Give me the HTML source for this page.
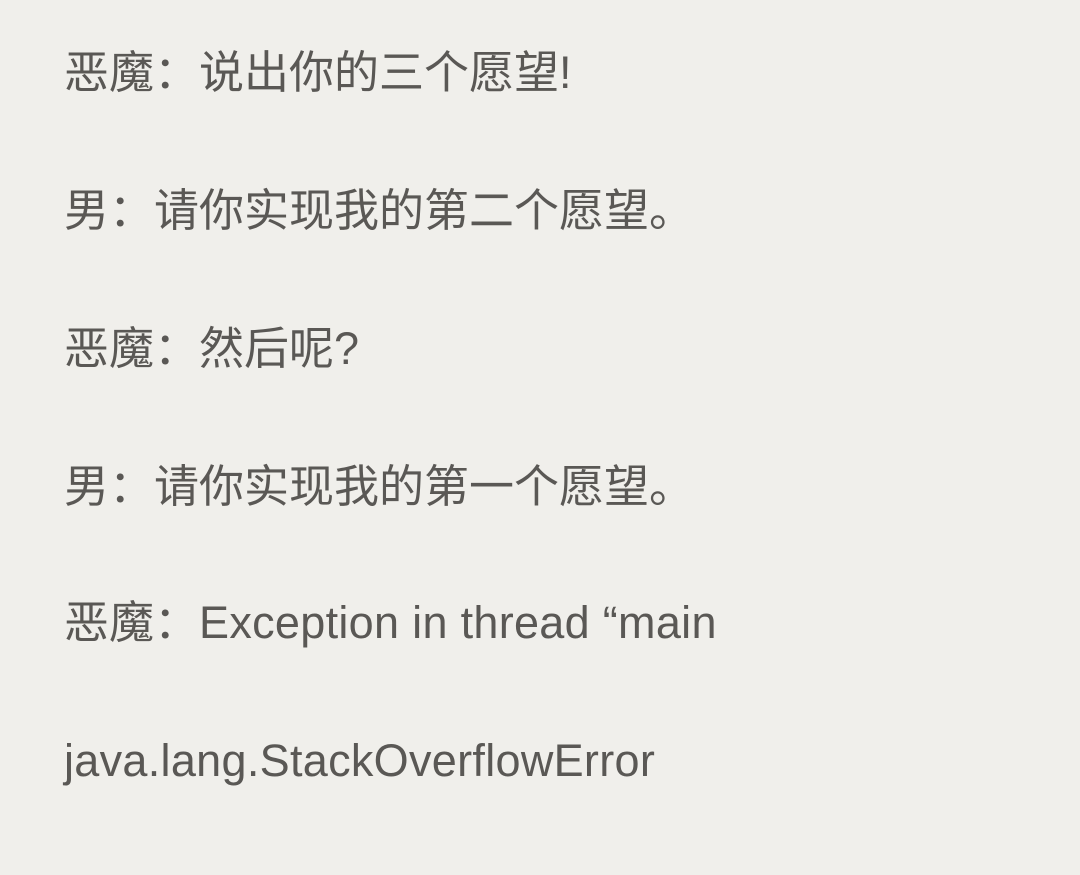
<!DOCTYPE html>
<html><head><meta charset="utf-8"><style>
html,body{margin:0;padding:0;width:1080px;height:875px;overflow:hidden;background:#f0efeb;}
.l{position:absolute;left:64px;height:60px;line-height:60px;font-size:45px;color:#5a5855;white-space:nowrap;font-family:"Liberation Sans","Noto Sans CJK SC",sans-serif;}
</style></head><body>
<div class="l" style="top:43px">恶魔：说出你的三个愿望!</div>
<div class="l" style="top:181px">男：请你实现我的第二个愿望。</div>
<div class="l" style="top:319px">恶魔：然后呢?</div>
<div class="l" style="top:457px">男：请你实现我的第一个愿望。</div>
<div class="l" style="top:593px">恶魔：<span style="letter-spacing:0.3px">Exception in thread “main</span></div>
<div class="l" style="top:731px;letter-spacing:0.3px">java.lang.StackOverflowError</div>
</body></html>
